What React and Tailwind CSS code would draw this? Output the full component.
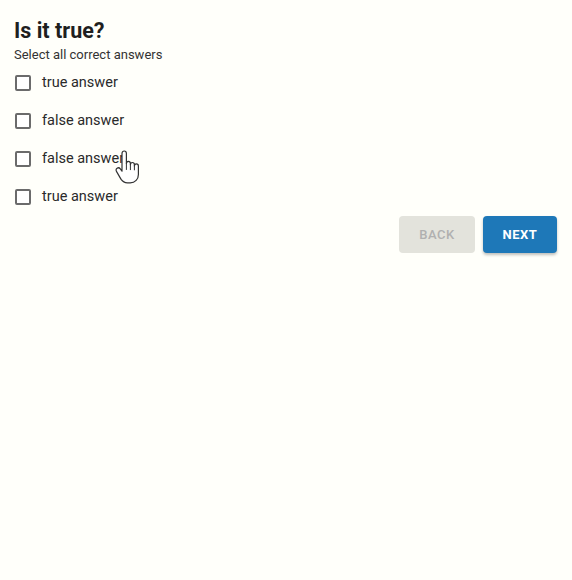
const answers = ["true answer", "false answer", "false answer", "true answer"];

const HandCursor = () => (
    <svg className="absolute left-[114px] top-[150px] pointer-events-none" width="28" height="36" viewBox="0 0 28 36" fill="none">
        <path
            d="M8 3.5c0-1.4 1-2.5 2.2-2.5s2.2 1.1 2.2 2.5v10c0-1.3.9-2.2 2-2.2s2 .9 2 2.2v1.2c0-1.3.9-2.2 2-2.2s2 .9 2 2.2v1.2c0-1.2.9-2.1 2-2.1s2 .9 2 2.1v8.6c0 4.8-3.3 8.3-8.2 8.3h-2.8c-3 0-4.8-1.2-6.3-3.4L2.6 21.6c-.9-1.3-.6-2.7.5-3.4 1.1-.7 2.4-.4 3.2.7L8 21.2V3.5z"
            fill="white"
            stroke="#333"
            strokeWidth="1.2"
            strokeLinejoin="round"
        />
        <path d="M12.4 13.5v6M16.4 14.7v5M20.4 15.9v4" stroke="#333" strokeWidth="1" strokeLinecap="round" />
    </svg>
);

const App = () => {
    return (
        <div className="relative min-h-screen bg-[#fffffa] font-['Roboto',_sans-serif] text-[#222]">
            <div className="px-[14px] pt-[17px]">
                <h1 className="text-[21.5px] font-bold leading-[28px] text-[#1f1f1f]">Is it true?</h1>
                <p className="mt-[2px] text-[13px] leading-[16px] text-[#333]">Select all correct answers</p>

                <div className="mt-[1px] flex flex-col">
                    {answers.map((a, i) => (
                        <label key={i} className="flex h-[38px] items-center gap-[11px]">
                            <span className="ml-px block h-[16px] w-[16px] rounded-[2px] border-2 border-[#6b6b6b] bg-white" />
                            <span className="text-[14.5px] text-[#2a2a2a]">{a}</span>
                        </label>
                    ))}
                </div>

                <div className="flex justify-end gap-[8px] pr-[1px]">
                    <button className="h-[37px] w-[76px] rounded-[4px] bg-[#e3e3dc] text-[13px] font-medium tracking-[0.5px] text-[#b0b0b0]">
                        BACK
                    </button>
                    <button className="h-[37px] w-[74px] rounded-[4px] bg-[#1e78b8] text-[13px] font-bold tracking-[0.5px] text-white shadow-[0_2px_3px_rgba(0,0,0,0.25)]">
                        NEXT
                    </button>
                </div>
            </div>
            <HandCursor />
        </div>
    );
};

export default App;
